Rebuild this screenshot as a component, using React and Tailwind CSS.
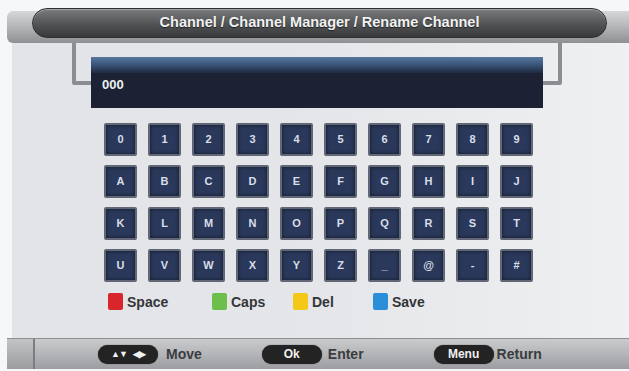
import React from "react";

const rows = [
  ["0", "1", "2", "3", "4", "5", "6", "7", "8", "9"],
  ["A", "B", "C", "D", "E", "F", "G", "H", "I", "J"],
  ["K", "L", "M", "N", "O", "P", "Q", "R", "S", "T"],
  ["U", "V", "W", "X", "Y", "Z", "_", "@", "-", "#"],
];

function Key({ ch }) {
  return (
    <div className="w-[33px] h-[33px] rounded-[2px] border-2 border-[#626775] bg-[#2a395b] shadow-[inset_0_0_4px_rgba(0,0,0,0.55)] flex items-center justify-center text-[11px] font-bold text-[#d9dee8]">
      {ch}
    </div>
  );
}

function Legend({ color, label, w }) {
  return (
    <div className={`flex items-center gap-[4px] ${w}`}>
      <div className={`w-[15px] h-[17px] rounded-[2px] ${color}`} />
      <span className="text-[14px] font-bold text-[#333538] leading-none">{label}</span>
    </div>
  );
}

function Pill({ children }) {
  return (
    <div className="w-[60px] h-[19px] rounded-full bg-[#232323] shadow-[0_0_1px_rgba(0,0,0,0.8)] flex items-center justify-center text-[12px] font-bold text-[#f0f0f0] leading-none">
      {children}
    </div>
  );
}

export default function App() {
  return (
    <div
      className="w-[629px] h-[371px] bg-[#f6f7f8] overflow-hidden flex flex-col"
      style={{ fontFamily: '"Liberation Sans", Arial, sans-serif' }}
    >
      {/* top band */}
      <div className="mt-[11px] ml-[7px] h-[32px] rounded-l-[6px] bg-gradient-to-b from-[#d6d7d8] via-[#b4b5b7] to-[#8e9093]">
        <div className="-mt-[3px] ml-[25px] mr-[22px] h-[30px] rounded-full bg-gradient-to-b from-[#7b7c7e] via-[#555658] to-[#38393b] border border-[#2e2f30] shadow-[inset_0_1px_1px_rgba(255,255,255,0.35)] flex items-center justify-center">
          <span className="text-[14.5px] font-bold text-[#f2f2f2] [text-shadow:0_1px_1px_rgba(0,0,0,0.6)]">
            Channel / Channel Manager / Rename Channel
          </span>
        </div>
      </div>

      {/* panel */}
      <div className="ml-[12px] h-[295px] bg-gradient-to-r from-[#e2e4e7] via-[#e4e6e9] to-[#eef0f2] flex flex-col">
        <div className="ml-[60px] w-[490px] h-[42px] border-x-[4px] border-b-[4px] border-[#8a8d92] rounded-b-[3px]" />
        <div className="relative -mt-[28px] ml-[79px] w-[452px] h-[51px] bg-[#1c2233] overflow-hidden flex flex-col">
          <div className="h-[16px] bg-gradient-to-b from-[#5777a0] via-[#3a5479] to-[#1e2a40]" />
          <div className="pl-[11px] pt-[5px] text-[13px] font-bold text-[#eef0f4] leading-none">000</div>
        </div>

        <div className="mt-[15px] ml-[92px] grid grid-cols-[repeat(10,33px)] gap-x-[11px] gap-y-[9px] w-max">
          {rows.flat().map((ch, i) => (
            <Key key={i} ch={ch} />
          ))}
        </div>

        <div className="mt-[11px] ml-[96px] flex items-center">
          <Legend color="bg-[#d8262a]" label="Space" w="w-[104px]" />
          <Legend color="bg-[#6cbf4a]" label="Caps" w="w-[81px]" />
          <Legend color="bg-[#f4c816]" label="Del" w="w-[80px]" />
          <Legend color="bg-[#2a8fd8]" label="Save" w="w-[80px]" />
        </div>
      </div>

      {/* bottom bar */}
      <div className="ml-[7px] h-[31px] border-t border-[#8d8f92] bg-gradient-to-b from-[#c9cbcd] via-[#b3b5b8] to-[#9b9da0] flex items-center">
        <div className="w-[28px] h-full border-r-2 border-[#7a7c7f] bg-gradient-to-b from-[#c2c4c6] to-[#9a9c9f]" />
        <div className="ml-[63px] flex items-center gap-[8px]">
          <Pill>
            <span className="text-[9px] tracking-[-1px]">▲▼</span>
            <span className="ml-[6px] text-[9px] tracking-[-1px]">◀▶</span>
          </Pill>
          <span className="text-[14px] font-bold text-[#3a3c3f]">Move</span>
        </div>
        <div className="ml-[60px] flex items-center gap-[6px]">
          <Pill>Ok</Pill>
          <span className="text-[14px] font-bold text-[#3a3c3f]">Enter</span>
        </div>
        <div className="ml-[70px] flex items-center gap-[3px]">
          <Pill>Menu</Pill>
          <span className="text-[14px] font-bold text-[#3a3c3f]">Return</span>
        </div>
      </div>
    </div>
  );
}
